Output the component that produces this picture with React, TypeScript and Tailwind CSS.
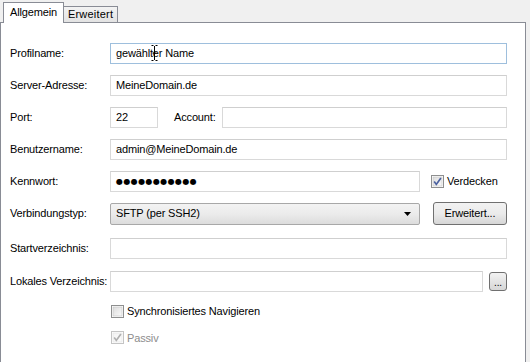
import React from "react";

const FONT = "font-['Tahoma','Liberation_Sans',Arial,sans-serif]";

function TextBox({
  value,
  className = "",
  focused = false,
  children,
}: {
  value?: string;
  className?: string;
  focused?: boolean;
  children?: React.ReactNode;
}) {
  return (
    <div
      className={`relative h-[21px] border bg-white pl-[5px] flex items-center text-black ${
        focused ? "border-[#9ebfdd]" : "border-[#d9d9d9] border-t-[#cfcfcf]"
      } ${className}`}
    >
      {value}
      {children}
    </div>
  );
}

function CheckBox({ checked, disabled }: { checked: boolean; disabled?: boolean }) {
  const border = disabled ? "#c4c4c4" : "#8e8f8f";
  const tick = disabled ? "#b0b0b0" : "#4b61a0";
  return (
    <svg width="13" height="13" viewBox="0 0 13 13" className="shrink-0">
      <defs>
        <linearGradient id={disabled ? "cbd" : "cbn"} x1="0" y1="0" x2="1" y2="1">
          <stop offset="0" stopColor={disabled ? "#f4f4f4" : "#dcdcdc"} />
          <stop offset="1" stopColor={disabled ? "#fbfbfb" : "#fafafa"} />
        </linearGradient>
      </defs>
      <rect x="0.5" y="0.5" width="12" height="12" fill="#fff" stroke={border} />
      <rect x="2" y="2" width="9" height="9" fill={`url(#${disabled ? "cbd" : "cbn"})`} stroke={disabled ? "#e2e2e2" : "#c2c2c2"} strokeWidth="0.6" />
      {checked && (
        <path d="M3.2 6.6 L5.3 9.4 L9.9 2.9" fill="none" stroke={tick} strokeWidth="1.7" />
      )}
    </svg>
  );
}

function Label({ children }: { children: React.ReactNode }) {
  return <div className="w-[100px] shrink-0 whitespace-nowrap">{children}</div>;
}

export default function App() {
  return (
    <div className={`w-[530px] h-[362px] bg-[#f0f0f0] overflow-hidden text-[11px] tracking-[-0.15px] text-black ${FONT}`}>
      {/* tabs */}
      <div className="relative z-10 flex items-end h-[23px] pl-[3px]">
        <div className="h-[21px] px-[6px] pt-[1px] bg-white border border-b-0 border-[#898c95] flex items-start">
          Allgemein
        </div>
        <div className="h-[16px] px-[4px] -ml-px mb-px border border-b-0 border-[#898c95] bg-gradient-to-b from-[#f3f3f3] to-[#e3e3e3] flex items-center tracking-[0.2px]">
          Erweitert
        </div>
      </div>

      {/* panel */}
      <div className="-mt-px mr-[4px] h-[345px] border border-b-0 border-[#898c95] bg-white pl-[9px] pr-[18px] pt-[20px] flex flex-col">
        <div className="flex items-center">
          <Label>Profilname:</Label>
          <TextBox value="gewählter Name" focused className="flex-1">
            <svg width="7" height="16" viewBox="0 0 7 16" className="absolute left-[40px] top-[1px]">
              <path d="M0.5 0.5 H2.5 M4.5 0.5 H6.5 M3.5 1 V15 M0.5 15.5 H2.5 M4.5 15.5 H6.5 M1.5 8 H5.5" stroke="#000" strokeWidth="1" fill="none" />
            </svg>
          </TextBox>
        </div>

        <div className="flex items-center mt-[11px]">
          <Label>Server-Adresse:</Label>
          <TextBox value="MeineDomain.de" className="flex-1" />
        </div>

        <div className="flex items-center mt-[11px]">
          <Label>Port:</Label>
          <TextBox value="22" className="w-[48px]" />
          <div className="ml-[16px] w-[48px] shrink-0">Account:</div>
          <TextBox className="flex-1" />
        </div>

        <div className="flex items-center mt-[11px]">
          <Label>Benutzername:</Label>
          <TextBox value="admin@MeineDomain.de" className="flex-1" />
        </div>

        <div className="flex items-center mt-[11px]">
          <Label>Kennwort:</Label>
          <TextBox className="w-[310px]">
            <span className="text-[8px] leading-none tracking-[0.4px] font-['DejaVu_Sans',sans-serif]">●●●●●●●●●●●</span>
          </TextBox>
          <div className="ml-[11px] flex items-center gap-[3px]">
            <CheckBox checked />
            <span>Verdecken</span>
          </div>
        </div>

        <div className="flex items-center mt-[10px]">
          <Label>Verbindungstyp:</Label>
          <div className="w-[310px] h-[22px] rounded-[2px] border border-[#a8a8a8] bg-gradient-to-b from-[#f3f3f3] via-[#ebebeb] to-[#dcdcdc] flex items-center pl-[5px] pr-[8px]">
            <span className="flex-1">SFTP (per SSH2)</span>
            <svg width="7" height="4" viewBox="0 0 7 4">
              <path d="M0 0 H7 L3.5 4 Z" fill="#000" />
            </svg>
          </div>
          <div className="ml-[13px] flex-1 h-[23px] rounded-[3px] border border-[#707070] bg-gradient-to-b from-[#f2f2f2] via-[#ebebeb] to-[#d6d6d6] flex items-center justify-center">
            Erweitert...
          </div>
        </div>

        <div className="flex items-center mt-[13px]">
          <Label>Startverzeichnis:</Label>
          <TextBox className="flex-1" />
        </div>

        <div className="flex items-center mt-[12px]">
          <Label>Lokales Verzeichnis:</Label>
          <TextBox className="flex-1" />
          <div className="ml-[6px] w-[18px] h-[19px] shrink-0 rounded-[3px] border border-[#707070] bg-gradient-to-b from-[#f2f2f2] to-[#d6d6d6] flex items-end justify-center pb-[2px] leading-none text-[10px]">
            ...
          </div>
        </div>

        <div className="flex items-center mt-[11px] ml-[101px] gap-[3px]">
          <CheckBox checked={false} />
          <span>Synchronisiertes Navigieren</span>
        </div>

        <div className="flex items-center mt-[10px] ml-[101px] gap-[3px] text-[#8d8d8d]">
          <CheckBox checked disabled />
          <span>Passiv</span>
        </div>
      </div>
    </div>
  );
}
